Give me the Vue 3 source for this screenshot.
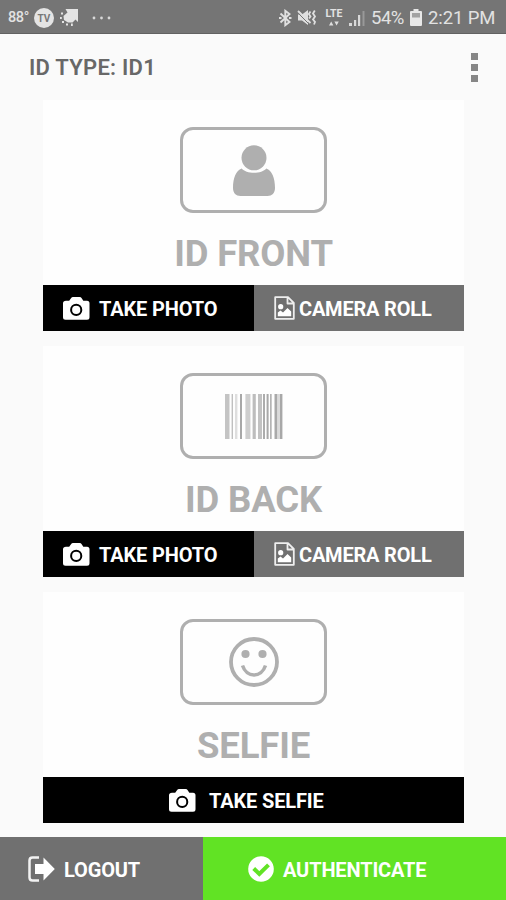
<script setup>
const cards = [
  { id: 'front', title: 'ID FRONT', actions: ['photo', 'roll'] },
  { id: 'back', title: 'ID BACK', actions: ['photo', 'roll'] },
  { id: 'selfie', title: 'SELFIE', actions: ['selfie'] },
]
const labels = { photo: 'TAKE PHOTO', roll: 'CAMERA ROLL', selfie: 'TAKE SELFIE' }
// x offset, width, fill
const bars = [
  [0, 4.5, '#c4c4c4'], [6.6, 1.4, '#c0c0c0'], [10, 2.4, '#dedede'], [15, 2, '#a8a8a8'],
  [20.4, 5, '#cecece'], [27.6, 3.2, '#bdbdbd'], [33, 4, '#c2c2c2'], [38, 2, '#acacac'],
  [41.6, 2, '#a8a8a8'], [45, 1.7, '#b4b4b4'], [49.5, 3, '#a9a9a9'], [52.5, 2.5, '#dadada'], [55, 2.4, '#a8a8a8'],
]
</script>

<template>
  <div class="screen">
    <header class="status">
      <span class="temp">88°</span>
      <svg class="tv" width="20" height="20" viewBox="0 0 20 20"><circle cx="10" cy="10" r="10" fill="#e4e4e4" /><text x="10" y="13.8" text-anchor="middle" class="tvtext">TV</text></svg>
      <svg class="share" width="19" height="19" viewBox="0 0 19 19" fill="#e4e4e4">
        <path d="M5.5 1H18V14L15.5 11.5L12.5 14.5H8L4 12L3.5 8L7.5 4.5Z" />
        <path d="M1 4.5H3V6.5H1ZM0 9H1.8V11H0ZM2 13H4V15H2ZM6 15.5H8V17.5H6ZM11 15.5H12.8V18H11Z" />
      </svg>
      <svg class="more" width="19" height="4" viewBox="0 0 19 4" fill="#d8d8d8"><circle cx="2" cy="2" r="1.4" /><circle cx="9.5" cy="2" r="1.4" /><circle cx="17" cy="2" r="1.4" /></svg>
      <svg class="bt" width="13" height="18" viewBox="0 0 13 18" fill="none" stroke="#e0e0e0" stroke-width="1.9"><path d="M1.5 4.5L10.5 13L6.3 16.2V1.8L10.5 5L1.5 13.5M0 9H2.5M10 9H12.5" /></svg>
      <svg class="mute" width="20" height="17" viewBox="0 0 20 17">
        <path d="M1 5.5H5L11 1V16L5 11.5H1Z" fill="#e0e0e0" />
        <path d="M0 3L12 15" stroke="#757575" stroke-width="1" />
        <path d="M1 2L13.5 14M13.5 2.5L11.8 5L13.5 7.5L12 9.5M17.8 1.5L16 4.5L18 7.5L16 10.5L18 13L17 15.5" fill="none" stroke="#e0e0e0" stroke-width="1.8" />
      </svg>
      <span class="lte">
        <span>LTE</span>
        <svg width="10" height="5" viewBox="0 0 10 5" fill="#dedede"><path d="M0 4.5L2.2 .5L4.4 4.5ZM5.4 .5H9.8L7.6 4.5Z" /></svg>
      </span>
      <svg class="signal" width="16" height="16" viewBox="0 0 16 16" fill="#d8d8d8"><path d="M0 13H3V16H0ZM5 10H7.2V16H5ZM9 5H11.2V16H9Z" /><path d="M13.5 1H15.5V16H13.5Z" fill="#999" /></svg>
      <span class="percent">54%</span>
      <svg class="battery" width="12" height="17" viewBox="0 0 12 17"><path d="M3.5 0H8.5V2H11Q12 2 12 3V16Q12 17 11 17H1Q0 17 0 16V3Q0 2 1 2H3.5Z" fill="#e8e8e8" /><path d="M2 4H10V8.5H2Z" fill="#a3a3a3" /></svg>
      <span class="time">2:21 PM</span>
    </header>

    <div class="titlebar">
      <h1>ID TYPE: ID1</h1>
      <div class="menu"><i></i><i></i><i></i></div>
    </div>

    <main>
      <section v-for="card in cards" :key="card.id" class="card">
        <div class="frame">
          <svg v-if="card.id === 'front'" width="42" height="51" viewBox="0 0 42 51" fill="#afafaf">
            <circle cx="21" cy="12.8" r="12.5" />
            <path d="M8.7 23.5C13 29.2 29 29.2 33.3 23.5C39 25.5 42 33 42 43C42 48 39 51 34.5 51H7.5C3 51 0 48 0 43C0 33 3 25.5 8.7 23.5Z" />
          </svg>
          <svg v-else-if="card.id === 'back'" width="58" height="45" viewBox="0 0 58 45">
            <rect v-for="(bar, i) in bars" :key="i" :x="bar[0]" y="0" :width="bar[1]" height="45" :fill="bar[2]" />
          </svg>
          <svg v-else width="50" height="50" viewBox="0 0 50 50" fill="#afafaf">
            <circle cx="25" cy="25" r="23" fill="none" stroke="#afafaf" stroke-width="3.8" />
            <circle cx="16.5" cy="17" r="4.1" /><circle cx="33.5" cy="17" r="4.1" />
            <path d="M13.5 28.5C17.5 41 32.5 41 36.5 28.5" fill="none" stroke="#afafaf" stroke-width="3.5" />
          </svg>
        </div>
        <h2>{{ card.title }}</h2>
        <div class="actions">
          <button v-for="action in card.actions" :key="action" :class="action">
            <svg v-if="action === 'roll'" class="file" width="21" height="24" viewBox="0 0 21 24">
              <path d="M1.2 1.2H14L19.8 7V22.8H1.2ZM13.5 1.2V7.5H19.8" fill="none" stroke="#eee" stroke-width="1.8" stroke-linejoin="round" />
              <circle cx="6.7" cy="10.7" r="2.6" fill="#fff" />
              <path d="M3.8 20.2V16.5L6.5 14.5L9 16.5L13.5 12L17.2 15.5V20.2Z" fill="#fff" />
            </svg>
            <svg v-else width="27" height="23" viewBox="0 0 27 23">
              <path d="M3 3.8H6.2L8 1.3Q8.8 0 10 0H16.5Q18 0 18.7 1.3L20.3 3.8H24Q26.5 3.8 26.5 6.3V20.3Q26.5 22.8 24 22.8H2.5Q0 22.8 0 20.3V6.3Q0 3.8 3 3.8Z" fill="#fff" />
              <circle cx="13.2" cy="12.9" r="5.1" fill="#fff" stroke="#000" stroke-width="2" />
            </svg>
            <span>{{ labels[action] }}</span>
          </button>
        </div>
      </section>
    </main>

    <footer>
      <button class="logout">
        <svg width="27" height="26" viewBox="0 0 27 26">
          <path d="M11 1.5H4.5Q1.5 1.5 1.5 4.5V21.5Q1.5 24.5 4.5 24.5H11" fill="none" stroke="#f2f2f2" stroke-width="2.5" />
          <path d="M7 8H15.5V1.5L26.8 13L15.5 24.5V18H7Z" fill="#fff" />
        </svg>
        <span>LOGOUT</span>
      </button>
      <button class="auth">
        <svg width="26" height="26" viewBox="0 0 26 26"><circle cx="13" cy="13" r="12.8" fill="#fff" /><path d="M5.7 12.5L11.3 18L20.5 8.8" fill="none" stroke="#61e324" stroke-width="4" /></svg>
        <span>AUTHENTICATE</span>
      </button>
    </footer>
  </div>
</template>

<style>
body { margin: 0; }
</style>

<style scoped>
* { box-sizing: border-box; }
svg { display: block; flex: none; }
span, h1, h2 { white-space: nowrap; }
.screen { width: 506px; height: 900px; background: #fafafa; font-family: Roboto, sans-serif; display: flex; flex-direction: column; overflow: hidden; }
.status { height: 34px; flex: none; background: #757575; border-bottom: 1px solid #626262; color: #e2e2e2; display: flex; align-items: center; padding: 2px 0 0 8px; }
.temp { width: 26px; font-size: 14.5px; font-weight: 500; letter-spacing: -0.4px; }
.tvtext { font: 700 10px Roboto, sans-serif; fill: #777; }
.share { margin-left: 6px; }
.more { margin-left: 13px; }
.bt { margin-left: 168px; }
.mute { margin-left: 5px; }
.lte { width: 18px; height: 17px; margin-left: 8px; display: flex; flex-direction: column; align-items: center; gap: 2px; }
.lte span { font-size: 10.5px; line-height: 10px; font-weight: 700; }
.signal { margin-left: 6px; }
.percent { width: 34px; margin-left: 6px; font-size: 18.5px; letter-spacing: -0.5px; }
.battery { margin-left: 5px; }
.time { margin-left: 6px; font-size: 18.5px; letter-spacing: -0.1px; }
.titlebar { height: 66px; flex: none; padding: 0 28px 0 29px; display: flex; justify-content: space-between; align-items: center; }
h1 { margin: 2px 0 0; font-size: 22px; line-height: 26px; font-weight: 600; color: #686868; letter-spacing: 0.25px; }
.menu { display: flex; flex-direction: column; gap: 4px; width: 7px; }
.menu i { width: 7px; height: 7px; background: #868686; }
main { padding: 0 42px 0 43px; display: flex; flex-direction: column; gap: 15px; }
.card { height: 231px; background: #fefefe; padding-top: 27px; display: flex; flex-direction: column; align-items: center; }
.frame { width: 147px; height: 86px; flex: none; border: 3px solid #afafaf; border-radius: 13px; display: flex; align-items: center; justify-content: center; }
h2 { margin: 18px 0 0; font-size: 36.5px; line-height: 46px; font-weight: 700; color: #afafaf; letter-spacing: -0.15px; }
.actions { width: 100%; height: 46px; margin-top: auto; display: flex; }
button { border: 0; padding: 0; margin: 0; font: 700 20px/24px Roboto, sans-serif; letter-spacing: -0.15px; color: #fff; display: flex; align-items: center; text-align: left; }
button span { padding-top: 1px; }
.photo { width: 211px; background: #000; padding-left: 20px; gap: 9px; }
.roll { flex: 1; background: #707070; padding-left: 20px; gap: 4px; letter-spacing: -0.2px; }
.actions .selfie { width: 100%; background: #000; padding-left: 126px; gap: 13px; }
footer { height: 63px; margin-top: auto; display: flex; flex: none; }
footer span { padding-top: 2px; }
.logout { width: 203px; background: #707070; padding-left: 28px; gap: 9px; }
.auth { flex: 1; background: #61e324; padding-left: 45px; gap: 9px; }
</style>
